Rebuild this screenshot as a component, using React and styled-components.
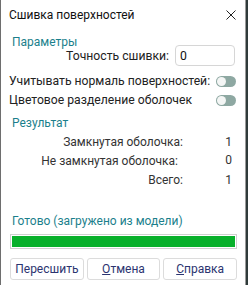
import styled, { createGlobalStyle } from 'styled-components';

const GlobalStyle = createGlobalStyle`
  html, body {
    margin: 0;
    padding: 0;
    background: #2f3b3a;
  }
  body {
    font-family: Roboto, 'Liberation Sans', sans-serif;
    color: #1e1e1e;
  }
`;

const Window = styled.div`
  width: 246px;
  height: 285px;
  box-sizing: border-box;
  background: #ffffff;
  border-left: 1px solid #6e6e6e;
  border-right: 1px solid #9a9a9a;
  display: flex;
  flex-direction: column;
  white-space: nowrap;
`;

const TitleBar = styled.div`
  height: 30px;
  display: flex;
  align-items: center;
  justify-content: space-between;
  padding: 0 9px 0 8px;
  font-size: 12px;
  color: #111;
`;

const Body = styled.div`
  display: flex;
  flex-direction: column;
  padding: 0 8px 0 8px;
`;

const SectionTitle = styled.div`
  color: #1b7f8c;
  font-size: 12px;
  padding-left: 3px;
  margin-top: ${(p) => p.$top || 0}px;
  line-height: 14px;
`;

const Row = styled.div`
  display: flex;
  align-items: center;
  justify-content: ${(p) => (p.$end ? 'flex-end' : 'space-between')};
  font-size: 12.2px;
  height: ${(p) => p.$h || 20}px;
  margin-top: ${(p) => p.$top || 0}px;
  color: #222;
`;

const Input = styled.div`
  width: 60px;
  height: 21px;
  box-sizing: border-box;
  border: 1px solid #d6d6d6;
  border-radius: 4px;
  margin-left: 6px;
  margin-right: 2px;
  font-size: 12.2px;
  display: flex;
  align-items: center;
  padding-left: 4px;
  color: #111;
`;

const Toggle = styled.div`
  width: 20px;
  height: 11px;
  border-radius: 6px;
  background: #8ea8a2;
  position: relative;
  margin-right: 1px;

  &::after {
    content: '';
    position: absolute;
    left: 1px;
    top: 1px;
    width: 9px;
    height: 9px;
    border-radius: 50%;
    background: #f4f6f5;
  }
`;

const Results = styled.div`
  display: grid;
  grid-template-columns: 1fr 54px;
  font-size: 12px;
  color: #333;
  margin-top: 3px;
`;

const ResultLabel = styled.div`
  text-align: right;
  height: 19px;
  line-height: 19px;
  padding-right: ${(p) => p.$pr || 0}px;
`;

const ResultValue = styled.div`
  text-align: right;
  height: 19px;
  line-height: ${(p) => (p.$up ? 16 : 19)}px;
  padding-right: 5px;
`;

const Progress = styled.div`
  height: 15px;
  box-sizing: border-box;
  border: 1px solid #d0d0d0;
  margin: 6px 0 0 1px;
  padding: 1px;
`;

const ProgressFill = styled.div`
  height: 100%;
  background: #08b02b;
`;

const Buttons = styled.div`
  display: grid;
  grid-template-columns: 1fr 1fr 1fr;
  column-gap: 3px;
  margin: 9px 0 0 1px;
`;

const Button = styled.div`
  height: 22px;
  box-sizing: border-box;
  border: 1px solid #dcdcdc;
  border-radius: 3px;
  display: flex;
  align-items: center;
  justify-content: center;
  font-size: 12px;
  color: #2b3470;
`;

const Key = styled.span`
  text-decoration: underline;
`;

function Close() {
  return (
    <svg width="10" height="10" viewBox="0 0 10 10">
      <path d="M0.5 0.5 L9.5 9.5 M9.5 0.5 L0.5 9.5" stroke="#222" strokeWidth="1" />
    </svg>
  );
}

export default function App() {
  return (
    <>
      <GlobalStyle />
      <Window>
        <TitleBar>
          <span>Сшивка поверхностей</span>
          <Close />
        </TitleBar>
        <Body>
          <SectionTitle $top={5}>Параметры</SectionTitle>
          <Row $end $h={21} $top={-4}>
            Точность сшивки:
            <Input>0</Input>
          </Row>
          <Row $h={22} $top={4}>
            Учитывать нормаль поверхностей:
            <Toggle />
          </Row>
          <Row $h={16}>
            Цветовое разделение оболочек
            <Toggle />
          </Row>
          <SectionTitle $top={8}>Результат</SectionTitle>
          <Results>
            <ResultLabel>Замкнутая оболочка:</ResultLabel>
            <ResultValue>1</ResultValue>
            <ResultLabel $pr={5}>Не замкнутая оболочка:</ResultLabel>
            <ResultValue $up>0</ResultValue>
            <ResultLabel>Всего:</ResultLabel>
            <ResultValue>1</ResultValue>
          </Results>
          <SectionTitle $top={24}>Готово (загружено из модели)</SectionTitle>
          <Progress>
            <ProgressFill />
          </Progress>
          <Buttons>
            <Button>Пересшить</Button>
            <Button>
              <Key>О</Key>тмена
            </Button>
            <Button>
              <Key>С</Key>правка
            </Button>
          </Buttons>
        </Body>
      </Window>
    </>
  );
}
